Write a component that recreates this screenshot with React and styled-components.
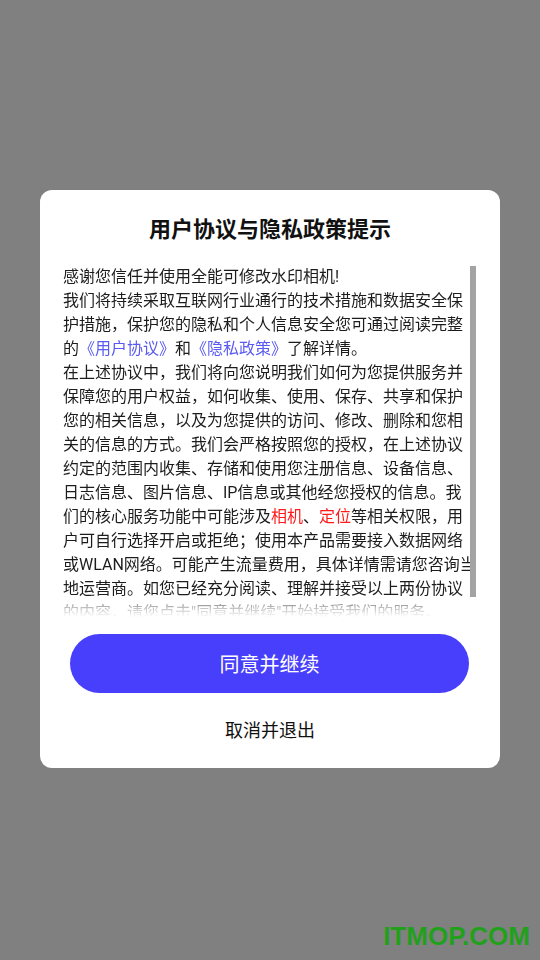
import React from "react";
import styled, { createGlobalStyle } from "styled-components";

const Global = createGlobalStyle`
  html, body {
    margin: 0;
    padding: 0;
    background: #808080;
  }
  body {
    font-family: Roboto, "Noto Sans CJK SC", sans-serif;
  }
`;

const Screen = styled.div`
  position: relative;
  width: 540px;
  height: 960px;
  display: flex;
  align-items: center;
  justify-content: center;
  background: #808080;
`;

const Dialog = styled.div`
  width: 460px;
  box-sizing: border-box;
  margin-top: -2px;
  background: #ffffff;
  border-radius: 12px;
  padding: 25px 0 23px 23px;
  display: flex;
  flex-direction: column;
`;

const Title = styled.h1`
  margin: 0 23px 0 0;
  font-family: Roboto, "Noto Sans CJK SC", sans-serif;
  font-size: 22px;
  line-height: 30px;
  font-weight: 700;
  color: #111;
  text-align: center;
`;

const ScrollView = styled.div`
  position: relative;
  margin-top: 20px;
  width: 415px;
  height: 352px;
  overflow: hidden;
`;

const ScrollContent = styled.div`
  height: 100%;
  overflow: hidden;
  -webkit-mask-image: linear-gradient(
    to bottom,
    #000 calc(100% - 20px),
    rgba(0, 0, 0, 0.3) calc(100% - 10px),
    transparent 100%
  );
  mask-image: linear-gradient(
    to bottom,
    #000 calc(100% - 20px),
    rgba(0, 0, 0, 0.3) calc(100% - 10px),
    transparent 100%
  );
`;

const Paragraph = styled.p`
  margin: 0;
  font-size: 16px;
  line-height: 24px;
  color: #1c1c1c;
`;

const Line = styled.span`
  display: block;
  white-space: nowrap;
`;

const Link = styled.span`
  color: ${(p) => (p.$tone === "red" ? "#ff1a1a" : "#5a5af2")};
`;

const Thumb = styled.div`
  position: absolute;
  top: 1px;
  right: 2px;
  width: 6px;
  height: 331px;
  background: #a3a3a3;
`;

const PrimaryButton = styled.button`
  margin: 17px 0 0 7px;
  width: 399px;
  height: 59px;
  border: none;
  border-radius: 30px;
  background: #483ffc;
  color: #ffffff;
  font-family: Roboto, "Noto Sans CJK SC", sans-serif;
  font-size: 20px;
  padding: 0;
  cursor: pointer;
`;

const TextButton = styled.button`
  margin: 20px 23px 0 0;
  height: 32px;
  border: none;
  background: transparent;
  color: #111;
  font-family: Roboto, "Noto Sans CJK SC", sans-serif;
  font-size: 18px;
  padding: 0;
  cursor: pointer;
`;

const Watermark = styled.div`
  position: absolute;
  right: 10px;
  bottom: 9px;
  font-family: "Liberation Sans", Arial, sans-serif;
  font-weight: 700;
  font-size: 26px;
  line-height: 30px;
  color: #22a01c;
`;

const paragraphs = [
  [["感谢您信任并使用全能可修改水印相机!"]],
  [
    ["我们将持续采取互联网行业通行的技术措施和数据安全保"],
    ["护措施，保护您的隐私和个人信息安全您可通过阅读完整"],
    ["的", { t: "《用户协议》" }, "和", { t: "《隐私政策》" }, "了解详情。"],
  ],
  [
    ["在上述协议中，我们将向您说明我们如何为您提供服务并"],
    ["保障您的用户权益，如何收集、使用、保存、共享和保护"],
    ["您的相关信息，以及为您提供的访问、修改、删除和您相"],
    ["关的信息的方式。我们会严格按照您的授权，在上述协议"],
    ["约定的范围内收集、存储和使用您注册信息、设备信息、"],
    ["日志信息、图片信息、IP信息或其他经您授权的信息。我"],
    ["们的核心服务功能中可能涉及", { t: "相机", red: true }, "、", { t: "定位", red: true }, "等相关权限，用"],
    ["户可自行选择开启或拒绝；使用本产品需要接入数据网络"],
    ["或WLAN网络。可能产生流量费用，具体详情需请您咨询当"],
    ["地运营商。如您已经充分阅读、理解并接受以上两份协议"],
    ["的内容，请您点击\"同意并继续\"开始接受我们的服务。"],
  ],
];

export default function App() {
  return (
    <>
      <Global />
      <Screen>
        <Dialog>
          <Title>用户协议与隐私政策提示</Title>
          <ScrollView>
            <ScrollContent>
              {paragraphs.map((lines, pi) => (
                <Paragraph key={pi}>
                  {lines.map((segs, li) => (
                    <Line key={li}>
                      {segs.map((s, si) =>
                        typeof s === "string" ? (
                          <React.Fragment key={si}>{s}</React.Fragment>
                        ) : (
                          <Link key={si} $tone={s.red ? "red" : "blue"}>
                            {s.t}
                          </Link>
                        )
                      )}
                    </Line>
                  ))}
                </Paragraph>
              ))}
            </ScrollContent>
            <Thumb />
          </ScrollView>
          <PrimaryButton>同意并继续</PrimaryButton>
          <TextButton>取消并退出</TextButton>
        </Dialog>
        <Watermark>ITMOP.COM</Watermark>
      </Screen>
    </>
  );
}
